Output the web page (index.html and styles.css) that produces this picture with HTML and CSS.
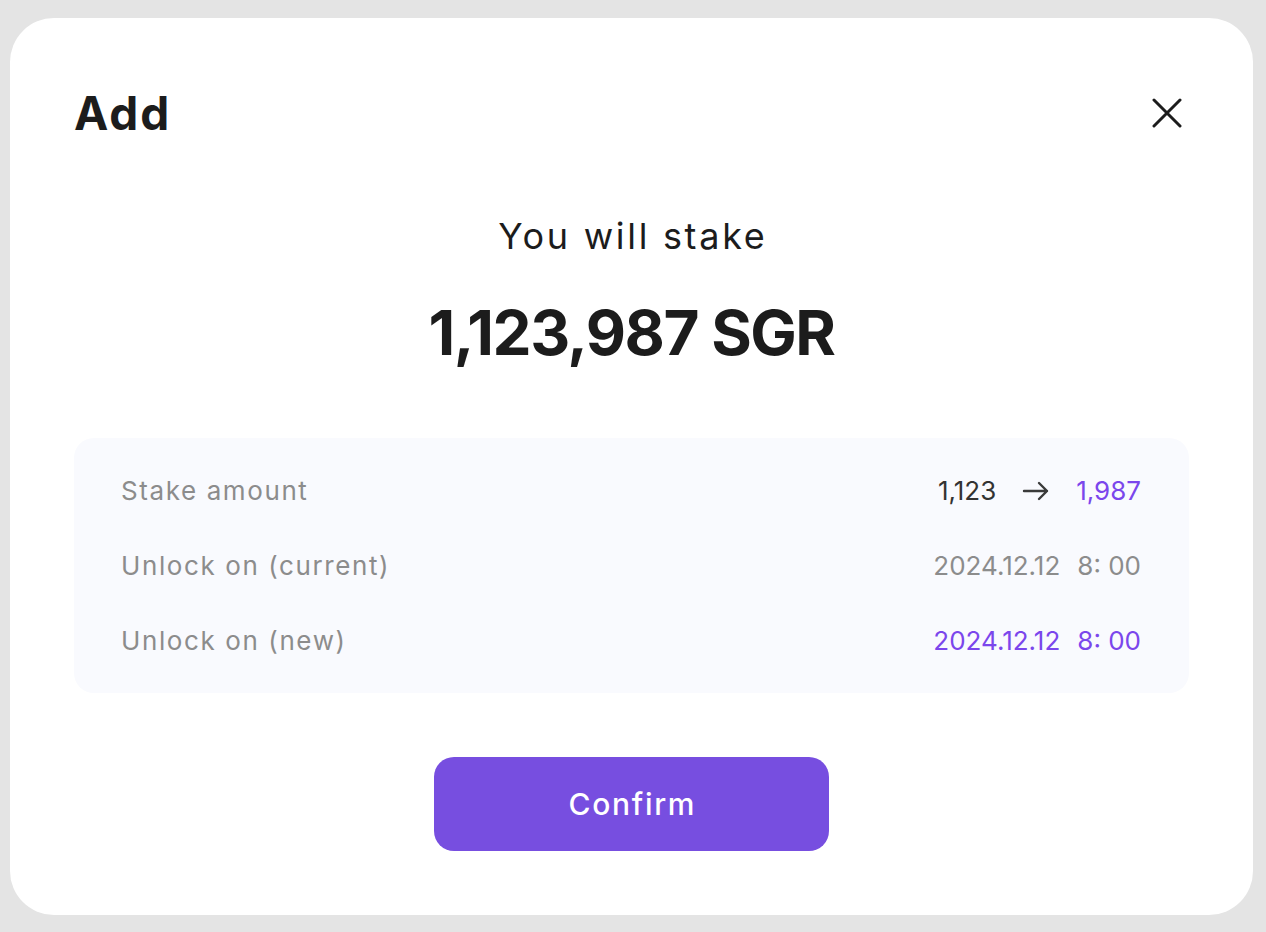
FILE: index.html
```html
<!DOCTYPE html>
<html lang="en">
<head>
<meta charset="utf-8">
<title>Add</title>
<link rel="stylesheet" href="styles.css">
</head>
<body>
<div class="modal">
  <div class="modal-header">
    <h1 class="modal-title">Add</h1>
    <button class="close-btn" aria-label="Close">
      <svg width="30" height="30" viewBox="0 0 30 30" fill="none" stroke="#1c1c1c" stroke-width="3" stroke-linecap="round">
        <path d="M2 2 L28 28 M28 2 L2 28"/>
      </svg>
    </button>
  </div>
  <p class="subtitle">You will stake</p>
  <p class="amount">1,123,987 SGR</p>
  <div class="info">
    <div class="row">
      <span class="label">Stake amount</span>
      <span class="value">
        <span class="dark">1,123</span>
        <svg class="arrow" width="28" height="20" viewBox="0 0 28 20" fill="none" stroke="#3a3a3a" stroke-width="2.4" stroke-linecap="round" stroke-linejoin="round"><path d="M2 10 H25 M17 2 L25 10 L17 18"/></svg>
        <span class="purple">1,987</span>
      </span>
    </div>
    <div class="row">
      <span class="label">Unlock on (current)</span>
      <span class="value grey"><span>2024.12.12</span><span>8: 00</span></span>
    </div>
    <div class="row">
      <span class="label">Unlock on (new)</span>
      <span class="value purple"><span>2024.12.12</span><span>8: 00</span></span>
    </div>
  </div>
  <div class="actions">
    <button class="confirm">Confirm</button>
  </div>
</div>
</body>
</html>
```
FILE: styles.css
```css
* { box-sizing: border-box; }
html, body { margin: 0; padding: 0; }
body {
  background: #e4e4e4;
  padding: 18px 13px 17px 10px;
  font-family: "Inter", "Open Sans", sans-serif;
  color: #1c1c1c;
}
.modal {
  width: 1243px;
  height: 897px;
  background: #ffffff;
  border-radius: 44px;
  padding: 65px 64px 0 64px;
  display: flex;
  flex-direction: column;
}
.modal-header {
  height: 60px;
  display: flex;
  align-items: center;
  justify-content: space-between;
}
.modal-title {
  margin: 0;
  font-size: 46px;
  font-weight: 700;
  line-height: 60px;
  letter-spacing: 2px;
}
.close-btn {
  border: 0;
  background: none;
  padding: 0;
  margin-right: 7px;
  width: 30px;
  height: 30px;
  display: flex;
}
.subtitle {
  margin: 68px 0 0;
  text-align: center;
  font-size: 36px;
  font-weight: 400;
  line-height: 50px;
  letter-spacing: 2.7px;
  text-indent: 2.7px;
}
.amount {
  margin: 32px 0 0;
  text-align: center;
  font-size: 62px;
  font-weight: 700;
  line-height: 80px;
  letter-spacing: -1.5px;
}
.info {
  margin-top: 65px;
  height: 255px;
  background: #f9fafe;
  border-radius: 20px;
  padding: 15px 48px 15px 47px;
  display: flex;
  flex-direction: column;
}
.row {
  height: 75px;
  display: flex;
  align-items: center;
  justify-content: space-between;
  font-size: 26px;
  line-height: 36px;
}
.label {
  color: #8c8c8c;
  letter-spacing: 1.6px;
}
.value {
  display: flex;
  align-items: center;
  gap: 17px;
}
.dark { color: #333333; }
.purple { color: #7b46ec; }
.grey { color: #8c8c8c; }
.arrow { margin: 0 9px; }
.actions {
  margin-top: 64px;
  display: flex;
  justify-content: center;
}
.confirm {
  width: 395px;
  height: 94px;
  border: 0;
  border-radius: 20px;
  background: #774ee0;
  color: #ffffff;
  font-family: "Inter", "Open Sans", sans-serif;
  font-size: 30px;
  font-weight: 500;
  letter-spacing: 1.7px;
  text-indent: 1.7px;
}
```
